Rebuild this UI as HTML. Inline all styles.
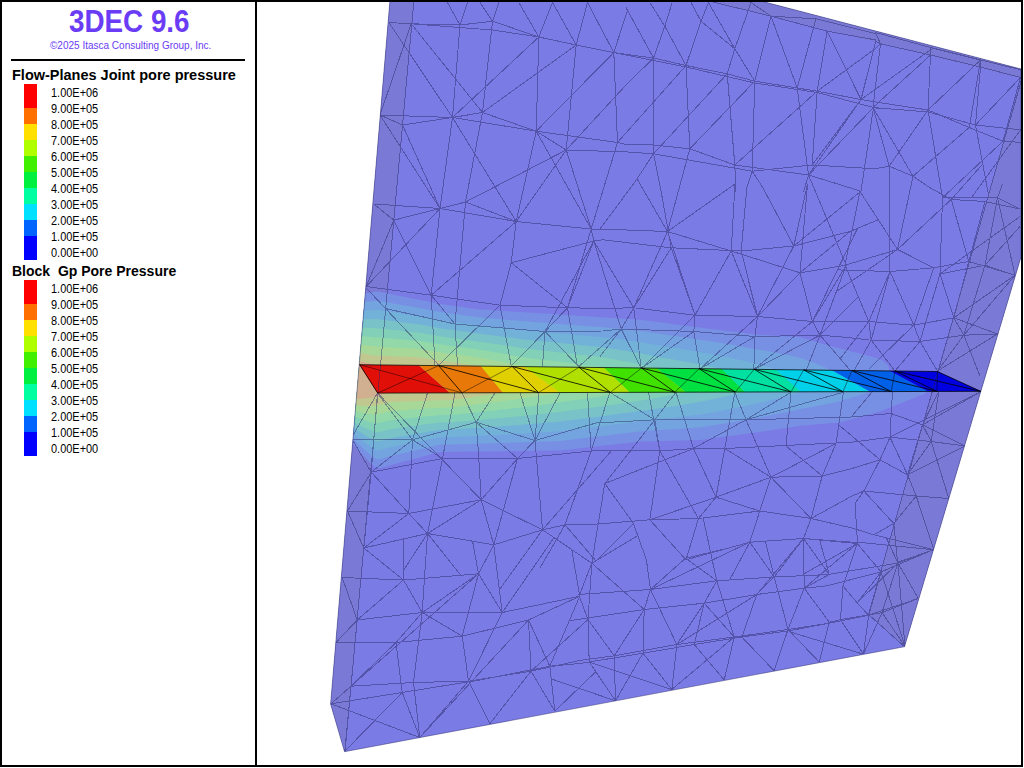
<!DOCTYPE html>
<html><head><meta charset="utf-8">
<style>
html,body{margin:0;padding:0;background:#fff;width:1024px;height:768px;overflow:hidden}
body{position:relative;font-family:"Liberation Sans",sans-serif}
.b{position:absolute;background:#000}
.t{position:absolute;white-space:nowrap;line-height:1}
.sw{position:absolute;left:24px;width:13px}
.lb{position:absolute;left:51px;font-size:12px;color:#000;white-space:nowrap;line-height:1;transform:scaleX(0.913);transform-origin:0 0}
svg{position:absolute;left:0;top:0}
</style></head><body>
<svg width="1024" height="768" viewBox="0 0 1024 768">
<defs><clipPath id="vp"><rect x="257" y="2" width="764" height="763"/></clipPath>
<clipPath id="blk"><polygon points="390,0 757,0 1021,69 1021,257 904.5,646.7 344.5,751.7 330.6,704"/></clipPath>
<clipPath id="jnt"><polygon points="359.4,364.7 937.4,371.5 980.6,391.3 377.5,393.1"/></clipPath>
</defs><g clip-path="url(#vp)">
<polygon points="390,0 757,0 1021,69 1021,257 904.5,646.7 344.5,751.7 330.6,704" fill="#7b7be6"/>
<polygon points="390,0 414,0 345,752 330.6,704" fill="#7a7ad6"/>
<polygon points="707,0 757,0 1021,69 1021,78" fill="#7a7ad6"/>
<polygon points="1024,70 1021,257 904.5,646.7 868.5,614.5" fill="#7a7ad6"/>
<g clip-path="url(#blk)">
<polygon points="320,292.9 324,293.3 328,293.7 332,294.2 336,294.6 340,295 344,295.5 348,295.9 352,296.3 356,295.3 360,294.3 364,293.5 368,292.9 372,292.2 376,291.6 380,292 384,292.8 388,293.6 392,294.4 396,295.2 400,296 404,296.8 408,297.6 412,298.4 416,299.2 420,300 424,300.8 428,301.6 432,302.4 436,303.2 440,304 444,304.6 448,305.1 452,305.7 456,306.2 460,306.8 464,307.3 468,307.9 472,308.4 476,309 480,309.5 484,309.8 488,310 492,310.3 496,310.5 500,310.8 504,311 508,311.3 512,311.6 516,311.8 520,312.1 524,312.3 528,312.6 532,312.8 536,313.1 540,313.3 544,313.6 548,313.8 552,314.1 556,314.4 560,314.6 564,314.9 568,315.1 572,315.4 576,315.6 580,315.9 584,316.1 588,316.4 592,316.6 596,316.9 600,317.2 604,317.4 608,317.7 612,317.9 616,318.2 620,318.4 624,318.7 628,318.9 632,319.2 636,319.4 640,319.7 644,320.2 648,320.7 652,321.3 656,321.8 660,322.3 664,322.8 668,323.3 672,323.9 676,324.4 680,324.9 684,325.4 688,325.9 692,326.5 696,327 700,327.5 704,328 708,328.5 712,329 716,329.5 720,330 724,330.5 728,331 732,331.5 736,332 740,332.4 744,332.9 748,333.4 752,333.9 756,334.4 760,334.9 764,335.1 768,335.3 772,335.5 776,335.7 780,335.9 784,336.2 788,336.4 792,336.6 796,336.8 800,337 804,338.2 808,339.4 812,340.6 816,341.8 820,343 824,344.1 828,345.3 832,346.5 836,347.5 840,348.5 844,349.6 848,350.6 852,351.7 856,352.7 860,353.7 864,354.8 868,355.8 872,356.8 876,357.9 880,358.9 884,362.1 888,365.3 890,372.9 928,389.5 924,394.5 920,395.5 916,397.1 912,398.7 908,400.3 904,401.9 900,403.5 896,405.1 892,406.7 888,408.3 884,409.9 880,411.5 876,412.6 872,413.7 868,414.8 864,415.9 860,417 856,418.1 852,419.1 848,420.2 844,421.3 840,422.4 836,422.8 832,423.1 828,423.4 824,423.8 820,424.1 816,424.5 812,424.8 808,425.2 804,425.5 800,425.8 796,426.5 792,427.1 788,427.7 784,428.3 780,428.9 776,429.5 772,430.1 768,430.7 764,431.3 760,432 756,432.5 752,433 748,433.6 744,434.1 740,434.7 736,435.2 732,435.7 728,436.3 724,436.8 720,437.3 716,437.9 712,438.4 708,439 704,439.5 700,440 696,440.1 692,440.2 688,440.3 684,440.4 680,440.5 676,440.6 672,440.7 668,440.8 664,440.9 660,441 656,441.1 652,441.2 648,441.3 644,441.4 640,441.5 636,442 632,442.4 628,442.9 624,443.3 620,443.8 616,444.2 612,444.7 608,445.1 604,445.6 600,446 596,446.5 592,446.9 588,447.4 584,447.8 580,448.3 576,448.7 572,449.2 568,449.7 564,450.1 560,450.6 556,450.6 552,450.6 548,450.7 544,450.7 540,450.8 536,450.8 532,450.9 528,450.9 524,451 520,451 516,451.1 512,451.1 508,451.1 504,451.2 500,451.2 496,451.3 492,451.3 488,451.4 484,451.4 480,451.5 476,451.5 472,451.6 468,451.6 464,451.6 460,451.7 456,451.7 452,451.8 448,451.8 444,451.9 440,451.9 436,453 432,454.1 428,455.1 424,456.2 420,457.3 416,458.4 412,459.4 408,460.5 404,461.6 400,462.6 396,463.7 392,464.8 388,465.9 384,466.9 380,468 376,467.9 372,464.3 368,460.5 364,456.5 360,452 356,447.4 352,442.8 348,443 344,443.3 340,443.5 336,443.7 332,444 328,444.2 324,444.4 320,444.7" fill="#7890e4"/>
<polygon points="320,300.3 324,300.8 328,301.3 332,301.8 336,302.3 340,302.8 344,303.2 348,303.7 352,304.2 356,303.4 360,302.6 364,302.1 368,301.6 372,301.2 376,300.7 380,301.1 384,301.8 388,302.5 392,303.3 396,304 400,304.7 404,305.4 408,306.1 412,306.8 416,307.5 420,308.2 424,309 428,309.8 432,310.5 436,311.3 440,312.1 444,312.6 448,313.2 452,313.7 456,314.3 460,314.8 464,315.4 468,315.9 472,316.5 476,317 480,317.6 484,317.9 488,318.2 492,318.6 496,318.9 500,319.3 504,319.6 508,319.9 512,320.3 516,320.6 520,321 524,321.3 528,321.6 532,321.9 536,322.2 540,322.5 544,322.8 548,323.1 552,323.4 556,323.7 560,324 564,324.4 568,324.7 572,325 576,325.3 580,325.6 584,325.9 588,326.2 592,326.5 596,326.8 600,327.1 604,327.4 608,327.8 612,328.2 616,328.6 620,328.9 624,329.3 628,329.7 632,330.1 636,330.5 640,330.9 644,331.5 648,332.1 652,332.7 656,333.3 660,333.9 664,334.5 668,335.1 672,335.7 676,336.3 680,336.9 684,337.4 688,338 692,338.6 696,339.2 700,339.8 704,340.4 708,341 712,341.6 716,342.2 720,342.8 724,343.5 728,344.1 732,344.8 736,345.5 740,346.2 744,346.9 748,347.7 752,348.4 756,349.2 760,349.9 764,350.6 768,351.2 772,351.9 776,352.7 780,353.4 784,354.2 788,355.1 792,355.9 796,356.9 800,357.9 804,359.3 808,360.8 812,362.3 816,363.8 820,365.3 824,366.9 828,368.6 832,372.3 870,389.6 868,392.3 864,393.6 860,394.9 856,396.1 852,397.4 848,398.6 844,399.8 840,401 836,402 832,402.9 828,403.7 824,404.6 820,405.4 816,406.1 812,406.9 808,407.6 804,408.3 800,409 796,409.9 792,410.8 788,411.6 784,412.5 780,413.3 776,414.1 772,415 768,415.7 764,416.5 760,417.3 756,418 752,418.8 748,419.5 744,420.2 740,420.8 736,421.5 732,422.2 728,422.8 724,423.5 720,424.1 716,424.8 712,425.4 708,426 704,426.7 700,427.3 696,427.6 692,427.9 688,428.2 684,428.5 680,428.8 676,429 672,429.3 668,429.6 664,429.8 660,430.1 656,430.4 652,430.6 648,430.8 644,431.1 640,431.3 636,431.8 632,432.3 628,432.8 624,433.3 620,433.8 616,434.3 612,434.7 608,435.2 604,435.7 600,436.2 596,436.6 592,437.1 588,437.6 584,438.1 580,438.5 576,439 572,439.5 568,439.9 564,440.4 560,440.9 556,441 552,441.2 548,441.3 544,441.5 540,441.6 536,441.8 532,441.9 528,442 524,442.2 520,442.3 516,442.4 512,442.6 508,442.7 504,442.8 500,442.9 496,443.1 492,443.2 488,443.3 484,443.4 480,443.6 476,443.7 472,443.8 468,443.9 464,444 460,444.2 456,444.3 452,444.4 448,444.5 444,444.5 440,444.5 436,445.5 432,446.4 428,447.4 424,448.3 420,449.2 416,450.2 412,451.1 408,452.1 404,453 400,453.9 396,454.9 392,455.8 388,456.8 384,457.9 380,459 376,459 372,455.9 368,452.7 364,449.3 360,445.3 356,441.4 352,437.3 348,437.6 344,437.9 340,438.2 336,438.4 332,438.7 328,439 324,439.3 320,439.5" fill="#74a4e0"/>
<polygon points="320,307.8 324,308.3 328,308.8 332,309.4 336,309.9 340,310.5 344,311 348,311.6 352,312.1 356,311.5 360,311 364,310.7 368,310.4 372,310.2 376,309.9 380,310.2 384,310.9 388,311.5 392,312.1 396,312.7 400,313.3 404,313.9 408,314.5 412,315.2 416,315.8 420,316.4 424,317.2 428,317.9 432,318.6 436,319.4 440,320.1 444,320.7 448,321.2 452,321.8 456,322.3 460,322.9 464,323.4 468,324 472,324.5 476,325.1 480,325.7 484,326 488,326.5 492,326.9 496,327.3 500,327.7 504,328.1 508,328.6 512,329 516,329.5 520,329.9 524,330.4 528,330.7 532,331.1 536,331.4 540,331.7 544,332.1 548,332.4 552,332.8 556,333.1 560,333.5 564,333.8 568,334.2 572,334.6 576,334.9 580,335.3 584,335.6 588,336 592,336.4 596,336.7 600,337.1 604,337.5 608,338 612,338.4 616,338.9 620,339.4 624,339.9 628,340.5 632,341 636,341.5 640,342.1 644,342.8 648,343.5 652,344.2 656,344.9 660,345.5 664,346.2 668,346.8 672,347.5 676,348.1 680,348.8 684,349.5 688,350.1 692,350.8 696,351.5 700,352.2 704,352.9 708,353.6 712,354.3 716,355 720,355.7 724,356.5 728,357.3 732,358.2 736,359.1 740,360 744,360.9 748,361.9 752,362.9 756,363.9 760,365 764,366 768,367.1 772,368.3 776,371.6 801,389.8 800,392.1 796,393.3 792,394.5 788,395.6 784,396.7 780,397.7 776,398.8 772,399.8 768,400.8 764,401.7 760,402.7 756,403.6 752,404.5 748,405.4 744,406.2 740,407 736,407.8 732,408.6 728,409.4 724,410.1 720,410.9 716,411.7 712,412.4 708,413.1 704,413.9 700,414.6 696,415.1 692,415.6 688,416 684,416.5 680,417 676,417.5 672,417.9 668,418.3 664,418.8 660,419.2 656,419.6 652,420 648,420.4 644,420.7 640,421.1 636,421.7 632,422.2 628,422.8 624,423.3 620,423.8 616,424.3 612,424.8 608,425.3 604,425.8 600,426.3 596,426.8 592,427.3 588,427.8 584,428.3 580,428.8 576,429.3 572,429.8 568,430.2 564,430.7 560,431.2 556,431.5 552,431.7 548,432 544,432.2 540,432.5 536,432.7 532,432.9 528,433.2 524,433.4 520,433.6 516,433.8 512,434 508,434.2 504,434.4 500,434.7 496,434.9 492,435.1 488,435.3 484,435.5 480,435.7 476,435.9 472,436.1 468,436.3 464,436.4 460,436.6 456,436.8 452,437 448,437.1 444,437.1 440,437.2 436,438 432,438.8 428,439.6 424,440.4 420,441.2 416,442 412,442.8 408,443.6 404,444.4 400,445.2 396,446.1 392,446.9 388,447.8 384,448.9 380,449.9 376,450.1 372,447.6 368,444.9 364,442 360,438.7 356,435.3 352,431.9 348,432.2 344,432.5 340,432.8 336,433.1 332,433.5 328,433.8 324,434.1 320,434.4" fill="#72b2d8"/>
<polygon points="320,315.2 324,315.8 328,316.4 332,317 336,317.6 340,318.2 344,318.8 348,319.4 352,320 356,319.7 360,319.3 364,319.2 368,319.2 372,319.2 376,319.1 380,319.4 384,319.9 388,320.4 392,320.9 396,321.4 400,322 404,322.5 408,323 412,323.5 416,324 420,324.6 424,325.3 428,326 432,326.7 436,327.5 440,328.2 444,328.7 448,329.3 452,329.8 456,330.4 460,330.9 464,331.5 468,332.1 472,332.6 476,333.2 480,333.7 484,334.2 488,334.7 492,335.2 496,335.7 500,336.2 504,336.7 508,337.2 512,337.7 516,338.3 520,338.8 524,339.4 528,339.8 532,340.2 536,340.6 540,341 544,341.3 548,341.7 552,342.1 556,342.5 560,342.9 564,343.3 568,343.7 572,344.1 576,344.6 580,345 584,345.4 588,345.8 592,346.2 596,346.6 600,347.1 604,347.5 608,348.1 612,348.7 616,349.3 620,349.9 624,350.6 628,351.2 632,351.9 636,352.5 640,353.2 644,354 648,354.8 652,355.6 656,356.4 660,357.2 664,357.9 668,358.6 672,359.3 676,360 680,360.8 684,361.5 688,362.2 692,363 696,363.8 700,364.5 704,365.3 708,366.1 712,366.9 716,367.7 720,368.5 722,371 745,390 744,392.2 740,393.2 736,394.1 732,395 728,395.9 724,396.8 720,397.7 716,398.5 712,399.4 708,400.2 704,401 700,401.8 696,402.6 692,403.2 688,403.9 684,404.6 680,405.2 676,405.9 672,406.5 668,407.1 664,407.7 660,408.3 656,408.8 652,409.4 648,409.9 644,410.4 640,410.9 636,411.5 632,412.2 628,412.7 624,413.3 620,413.8 616,414.3 612,414.8 608,415.4 604,415.9 600,416.4 596,416.9 592,417.5 588,418 584,418.5 580,419 576,419.5 572,420 568,420.5 564,421 560,421.6 556,421.9 552,422.3 548,422.6 544,423 540,423.3 536,423.6 532,424 528,424.3 524,424.6 520,424.9 516,425.2 512,425.5 508,425.8 504,426.1 500,426.4 496,426.7 492,426.9 488,427.2 484,427.5 480,427.8 476,428.1 472,428.3 468,428.6 464,428.8 460,429.1 456,429.3 452,429.6 448,429.7 444,429.8 440,429.8 436,430.5 432,431.1 428,431.8 424,432.5 420,433.2 416,433.8 412,434.5 408,435.2 404,435.9 400,436.5 396,437.2 392,437.9 388,438.8 384,439.8 380,440.9 376,441.2 372,439.2 368,437.1 364,434.8 360,432.1 356,429.3 352,426.4 348,426.8 344,427.1 340,427.5 336,427.9 332,428.2 328,428.6 324,428.9 320,429.2" fill="#78c2c8"/>
<polygon points="320,322.7 324,323.3 328,324 332,324.6 336,325.2 340,325.9 344,326.6 348,327.2 352,327.9 356,327.8 360,327.7 364,327.8 368,328 372,328.1 376,328.2 380,328.5 384,328.9 388,329.3 392,329.8 396,330.2 400,330.6 404,331 408,331.5 412,331.9 416,332.3 420,332.8 424,333.5 428,334.2 432,334.8 436,335.5 440,336.2 444,336.8 448,337.3 452,337.9 456,338.4 460,339 464,339.6 468,340.1 472,340.7 476,341.2 480,341.8 484,342.3 488,342.9 492,343.5 496,344 500,344.6 504,345.2 508,345.8 512,346.5 516,347.1 520,347.7 524,348.4 528,348.9 532,349.3 536,349.7 540,350.2 544,350.6 548,351 552,351.5 556,351.9 560,352.4 564,352.8 568,353.3 572,353.7 576,354.2 580,354.7 584,355.1 588,355.6 592,356.1 596,356.6 600,357.1 604,357.5 608,358.2 612,359 616,359.7 620,360.4 624,361.2 628,362 632,362.8 636,363.6 640,364.4 644,365.3 648,366.2 652,367.1 656,368 657,370.2 686,390.2 684,392.6 680,393.5 676,394.3 672,395.1 668,395.8 664,396.6 660,397.3 656,398 652,398.7 648,399.4 644,400.1 640,400.7 636,401.4 632,402.1 628,402.7 624,403.2 620,403.8 616,404.4 612,404.9 608,405.5 604,406 600,406.5 596,407.1 592,407.6 588,408.2 584,408.7 580,409.2 576,409.8 572,410.3 568,410.8 564,411.4 560,411.9 556,412.4 552,412.8 548,413.3 544,413.7 540,414.1 536,414.6 532,415 528,415.4 524,415.8 520,416.2 516,416.6 512,417 508,417.3 504,417.7 500,418.1 496,418.5 492,418.8 488,419.2 484,419.5 480,419.9 476,420.2 472,420.6 468,420.9 464,421.2 460,421.6 456,421.9 452,422.2 448,422.4 444,422.4 440,422.4 436,423 432,423.5 428,424 424,424.6 420,425.1 416,425.7 412,426.2 408,426.8 404,427.3 400,427.8 396,428.4 392,428.9 388,429.7 384,430.8 380,431.8 376,432.3 372,430.9 368,429.3 364,427.5 360,425.4 356,423.2 352,421 348,421.4 344,421.8 340,422.2 336,422.6 332,423 328,423.3 324,423.7 320,424.1" fill="#82d0b8"/>
<polygon points="320,330.2 324,330.8 328,331.5 332,332.2 336,332.9 340,333.6 344,334.3 348,335 352,335.8 356,335.9 360,336.1 364,336.4 368,336.7 372,337.1 376,337.4 380,337.6 384,337.9 388,338.3 392,338.6 396,338.9 400,339.2 404,339.6 408,339.9 412,340.2 416,340.6 420,341 424,341.6 428,342.3 432,342.9 436,343.6 440,344.3 444,344.8 448,345.4 452,345.9 456,346.5 460,347 464,347.6 468,348.2 472,348.7 476,349.3 480,349.9 484,350.4 488,351.1 492,351.7 496,352.4 500,353.1 504,353.8 508,354.5 512,355.2 516,355.9 520,356.7 524,357.4 528,358 532,358.4 536,358.9 540,359.4 544,359.8 548,360.3 552,360.8 556,361.3 560,361.8 564,362.3 568,362.8 572,363.3 576,363.8 580,364.4 584,364.9 588,365.4 592,365.9 596,366.5 600,367 604,369.6 630,390.3 628,392.6 624,393.2 620,393.8 616,394.4 612,395 608,395.5 604,396.1 600,396.7 596,397.2 592,397.8 588,398.4 584,398.9 580,399.5 576,400 572,400.6 568,401.1 564,401.7 560,402.2 556,402.8 552,403.4 548,403.9 544,404.5 540,405 536,405.5 532,406 528,406.5 524,407 520,407.5 516,408 512,408.4 508,408.9 504,409.3 500,409.8 496,410.2 492,410.7 488,411.1 484,411.6 480,412 476,412.4 472,412.8 468,413.2 464,413.6 460,414 456,414.4 452,414.8 448,415 444,415 440,415 436,415.4 432,415.9 428,416.3 424,416.7 420,417.1 416,417.5 412,417.9 408,418.3 404,418.7 400,419.1 396,419.5 392,420 388,420.7 384,421.7 380,422.8 376,423.4 372,422.5 368,421.5 364,420.3 360,418.8 356,417.2 352,415.5 348,415.9 344,416.4 340,416.8 336,417.3 332,417.7 328,418.1 324,418.5 320,419" fill="#92d8a8"/>
<polygon points="320,337.6 324,338.3 328,339.1 332,339.8 336,340.6 340,341.3 344,342.1 348,342.9 352,343.7 356,344 360,344.4 364,344.9 368,345.5 372,346.1 376,346.6 380,346.7 384,346.9 388,347.2 392,347.4 396,347.7 400,347.9 404,348.1 408,348.4 412,348.6 416,348.8 420,349.2 424,349.8 428,350.4 432,351.1 436,351.7 440,352.3 444,352.9 448,353.4 452,354 456,354.5 460,355.1 464,355.7 468,356.2 472,356.8 476,357.4 480,357.9 484,358.6 488,359.3 492,360 496,360.8 500,361.5 504,362.3 508,363.1 512,363.9 516,364.7 520,365.6 524,366.4 525,368.6 560,390.6 556,393.2 552,393.9 548,394.6 544,395.2 540,395.8 536,396.4 532,397 528,397.6 524,398.2 520,398.8 516,399.3 512,399.9 508,400.4 504,400.9 500,401.5 496,402 492,402.6 488,403.1 484,403.6 480,404.1 476,404.6 472,405.1 468,405.6 464,406 460,406.5 456,406.9 452,407.4 448,407.6 444,407.6 440,407.7 436,407.9 432,408.2 428,408.5 424,408.8 420,409 416,409.3 412,409.6 408,409.9 404,410.2 400,410.4 396,410.7 392,411 388,411.7 384,412.7 380,413.8 376,414.5 372,414.1 368,413.7 364,413 360,412.1 356,411.1 352,410 348,410.5 344,411 340,411.5 336,412 332,412.4 328,412.9 324,413.4 320,413.8" fill="#a8d898"/>
<polygon points="320,345.1 324,345.8 328,346.6 332,347.4 336,348.2 340,349 344,349.9 348,350.7 352,351.5 356,352.1 360,352.8 364,353.5 368,354.3 372,355.1 376,355.7 380,355.8 384,356 388,356.1 392,356.3 396,356.4 400,356.5 404,356.7 408,356.8 412,357 416,357.1 420,357.4 424,358 428,358.6 432,359.2 436,359.7 440,360.3 444,360.9 448,361.5 452,362 456,362.6 460,363.2 464,363.7 468,364.3 472,364.9 476,365.4 480,366 481,368.1 503,390.7 500,393.2 496,393.8 492,394.4 488,395 484,395.6 480,396.2 476,396.8 472,397.3 468,397.9 464,398.4 460,399 456,399.5 452,400 448,400.3 444,400.3 440,400.3 436,400.4 432,400.6 428,400.7 424,400.9 420,401 416,401.2 412,401.3 408,401.4 404,401.6 400,401.7 396,401.9 392,402 388,402.6 384,403.7 380,404.7 376,405.6 372,405.8 368,405.9 364,405.8 360,405.5 356,405.1 352,404.6 348,405.1 344,405.6 340,406.2 336,406.7 332,407.2 328,407.7 324,408.2 320,408.7" fill="#c0c890"/>
<polygon points="320,352.5 324,353.3 328,354.2 332,355 336,355.9 340,356.8 344,357.6 348,358.5 352,359.4 356,360.3 360,361.1 364,362.1 368,363 372,364.1 375,366.9 390,391.1 388,393.6 384,394.6 380,395.7 376,396.7 372,397.4 368,398 364,398.5 360,398.8 356,399 352,399.1 348,399.7 344,400.3 340,400.8 336,401.4 332,401.9 328,402.5 324,403 320,403.5" fill="#d0b090"/>
</g>
<g clip-path="url(#jnt)">
<polygon points="200,355 407.3,355 458,400 200,400" fill="#e01008"/>
<polygon points="407.3,355 471.8,355 509,400 458,400" fill="#e87808"/>
<polygon points="471.8,355 509.3,355 570.1,400 509,400" fill="#e0d000"/>
<polygon points="509.3,355 590.8,355 638,400 570.1,400" fill="#b0e000"/>
<polygon points="590.8,355 641,355 695.5,400 638,400" fill="#40e000"/>
<polygon points="641,355 708.1,355 753,400 695.5,400" fill="#00e040"/>
<polygon points="708.1,355 759.6,355 810.2,400 753,400" fill="#00e0a0"/>
<polygon points="759.6,355 804.9,355 884.9,400 810.2,400" fill="#00d0e8"/>
<polygon points="804.9,355 860.5,355 943.8,400 884.9,400" fill="#0060e8"/>
<polygon points="860.5,355 1100,355 1100,400 943.8,400" fill="#0000e0"/>
</g>
<path d="M390,0 L757,0 L1021,69 L1021,257 L904.5,646.7 L344.5,751.7 L330.6,704 Z" fill="none" stroke="#282864" stroke-opacity="0.45" stroke-width="1"/>
<g clip-path="url(#blk)"><path d="M447.5,2.5 L460,25M467.5,2.5 L460,25M480,2.5 L492.5,21.2M498.8,2.5 L492.5,21.2M518.8,2.5 L538.8,37M552.5,2.5 L538.8,37M552.5,2.5 L576.2,45M587.5,2.5 L576.2,45M587.5,2.5 L613.8,52.5M627.5,10.3 L613.8,52.5M388.8,22.5 L411.2,23.8 L460,25 L492.5,21.2M411.2,23.8 L492.5,30 L538.8,37M492.5,21.2 L538.8,37M538.8,37 L576.2,45 L613.8,52.5 L626,54.4M460,25 L452.5,117.5M492.5,21.2 L482.5,112.5M538.8,37 L536.2,131.2M576.2,45 L566.2,150M613.8,52.5 L617.5,142.5M388.8,22.5 L452.5,117.5M411.2,23.8 L482.5,112.5M538.8,37 L452.5,117.5M576.2,45 L482.5,112.5M613.8,52.5 L536.2,131.2M626,85 L566.2,150M380,115 L452.5,117.5 L482.5,112.5M402.5,125 L452.5,117.5M452.5,117.5 L536.2,131.2 L566.2,150M482.5,112.5 L536.2,131.2 L617.5,142.5 L626,144.4M380,115 L402.5,125M566.2,150 L626,151.9M402.5,125 L440,208.5M452.5,117.5 L440,208.5M452.5,117.5 L516.2,221.5M482.5,112.5 L465.5,202M536.2,131.2 L516.2,221.5M536.2,131.2 L591.2,229M566.2,150 L465.5,202M566.2,150 L516.2,221.5M566.2,150 L591.2,229M617.5,142.5 L591.2,229M380,115 L440,208.5M411.2,23.8 L380,115M626,54.4 L653.5,58 L686,65.5 L727.2,73.8 L754.8,81.2 L797.2,88 L817.2,91.2 L861,99.5 L875,101.9M613.8,52.5 L686,67 L754.8,83 L817.2,92.5 L873.5,107.5 L882,109M713,2 L771,16.2 L827.2,31.2 L876,40 L875,41M751,2.5 L771,16.2 L816,18.8 L876,33.8M626,7.5 L653.5,58M649.8,2.5 L664.8,26.2M672.2,2.5 L664.8,26.2M664.8,26.2 L653.5,58M664.8,26.2 L686,65.5M691,2.5 L701,21.2M708.5,2.5 L701,21.2M701,21.2 L686,65.5M701,21.2 L734.8,48.8M708.5,2.5 L734.8,48.8 L754.8,81.2M751,2.5 L734.8,48.8 L727.2,73.8M771,16.2 L754.8,81.2M771,16.2 L797.2,88M816,18.8 L797.2,88M827.2,31.2 L817.2,91.2M827.2,31.2 L861,99.5M876,40 L861,99.5M653.5,58 L653.5,153.8M686,65.5 L689.8,148.8M727.2,73.8 L734.8,165M754.8,81.2 L752.2,171.2M797.2,88 L808.5,175M817.2,91.2 L812.2,165M861,99.5 L808.5,175M873.5,107.5 L861,191.2M626,85 L653.5,58M617.5,142.5 L686,65.5M653.5,153.8 L727.2,73.8M689.8,148.8 L754.8,81.2M734.8,165 L817.2,91.2M812.2,165 L861,99.5M808.5,175 L873.5,107.5M817.2,91.2 L875,48.8M626,144.4 L653.5,145 L689.8,148.8 L734.8,165M626,151.9 L653.5,153.8 L752.2,171.2M752.2,171.2 L812.2,165 L875,168.8M734.8,165 L808.5,175 L861,191.2M653.5,153.8 L634.9,182M653.5,153.8 L660.5,188M689.8,148.8 L679.2,188M734.8,165 L736,192M752.2,171.2 L746.8,188M752.2,171.2 L763,188M808.5,175 L803.5,192M875,41 L880.5,43.8 L930.5,55 L980.5,67 L1020.5,77.5M875.5,32.5 L930.5,47.5 L980.5,60 L1022,70M875.5,32.5 L880.5,43.8M930.5,47.5 L930.5,55M980.5,60 L980.5,67M880.5,43.8 L873,107.5M930.5,55 L928,110M980.5,60 L969.2,127.5M980.5,67 L975.5,125M1020.5,77.5 L1003,141.2M880.5,43.8 L875,48.8M933,48.1 L861,99.5M930.5,55 L873,107.5M980.5,60 L928,110M1020.5,77.5 L975.5,125M928,110 L889.2,166.2M969.2,127.5 L913,176.2M1003,141.2 L942.5,197.8M1020.5,130 L971.3,197.8M875,101.9 L928,110 L969.2,127.5 L1003,141.2 L1022,142.5M873,107.5 L928,112 L975.5,125 L1022,130M873,107.5 L889.2,166.2M873,107.5 L913,176.2M928,110 L942.5,197.8M975.5,125 L988.5,194.9M875,168.8 L889.2,166.2 L913,176.2 L928.8,187M889.2,166.2 L889.6,188M1022,78 L868.5,614.5 L904.5,646.7M373.8,204 L440,208.5 L516.2,221.5 L591.2,229 L606,229M393.8,220.2 L440,208.5 L465.5,202M373.8,204 L393.8,220.2M465.5,202 L516.2,221.5M440,208.5 L431.2,295.2M465.5,202 L455,324M516.2,221.5 L511.2,262.8M593.8,241 L511.2,262.8M393.8,220.2 L431.2,295.2M393.8,220.2 L366.2,286.5M440,208.5 L366.2,286.5M516.2,221.5 L431.2,295.2M511.2,262.8 L500,305.2M511.2,262.8 L567.5,307.8M366.2,286.5 L431.2,295.2 L500,305.2 L567.5,307.8 L603,308.4M385.7,308.6 L455,324 L545,331.5 L603,331M431.2,295.2 L455,324M455,324 L457.5,365M431.2,295.2 L435,365M500,305.2 L511.2,366M500,305.2 L438.8,365.2M567.5,307.8 L545,331.5M567.5,307.8 L593.8,241M545,331.5 L578.8,366.5M545,331.5 L511.2,366M545,331.5 L542.5,366M545,331.5 L593.8,241M567.5,307.8 L577.5,366.5M621.2,329 L578.8,366.5M366.2,288 L438.8,365.2M591.2,229 L567.5,307.8M591.2,229 L593.8,241 L603,239.8M600,229 L667.5,231.5 L731.2,251 L800,272.8 L846.2,265.2 L848,264.5M603,239.8 L671.2,247.8 L741.2,251 L793.8,246 L850,231.5 L878.3,219.7M603,308.4 L633.8,307.8 L695,315.2 L757.5,316.5 L812.5,321.5 L848,321.5M603,331 L621.2,329 L693.8,331.5 L755,336.5 L820,335.2 L848,337.5M634.9,182 L600,229M637,178.8 L667.5,231.5M679.2,188 L667.5,231.5M660.5,188 L671.2,247.8M735,184 L667.5,231.5M735,184 L731.2,251M746.8,188 L741.2,251M763,188 L793.8,246M807.5,184 L793.8,246M807.5,184 L800,272.8M808.5,175 L846.2,265.2M861,191.2 L793.8,246M850,231.5 L800,272.8M667.5,231.5 L633.8,307.8M671.2,247.8 L695,315.2M667.5,231.5 L695,315.2M671.2,247.8 L633.8,307.8M593.8,241 L633.8,307.8M731.2,251 L695,315.2M741.2,251 L757.5,316.5M731.2,251 L757.5,316.5M793.8,246 L757.5,316.5M800,272.8 L812.5,321.5M846.2,265.2 L812.5,321.5M633.8,307.8 L621.2,329M633.8,307.8 L641.2,368.5M695,315.2 L693.8,331.5M695,315.2 L641.2,368.5M757.5,316.5 L755,336.5M757.5,316.5 L700,369M812.5,321.5 L753.8,369.5M812.5,321.5 L820,335.2M621.2,329 L641.2,368.5M621.2,329 L600,356.5M693.8,331.5 L700,369M693.8,331.5 L641.2,368.5M755,336.5 L753.8,369.5M755,336.5 L700,369M820,335.2 L806.2,370.2M820,335.2 L850,370M820,335.2 L753.8,369.5M846.2,265.2 L820,335.2M857.5,228.4 L812.5,321.5M858.3,296.7 L820,335.2M800,272.8 L757.5,316.5M593.8,241 L621.2,329M848,264.5 L845,265.2 L897.5,249.5 L933.8,267.8M837.4,269.9 L890,271.5 L933.8,267.8 L968.8,261.5 L1015,275.2M940,274 L985,265.2 L1015,275.2M942.5,197.8 L997.5,197.8 L1020,209M951.2,199.5 L985,201.5 L1020,209M860,191.5 L845,265.2M860,191.5 L897.5,249.5M889.6,188 L890,271.5M913,176.2 L897.5,249.5M928.8,187 L951.2,199.5M951.2,199.5 L897.5,249.5 L836.4,291.5M951.2,199.5 L968.8,261.5M942.5,197.8 L940,274M982.8,164 L951.2,199.5M985,201.5 L968.8,261.5M997.5,197.8 L985,265.2M997.5,197.8 L1015,275.2M1020,216.5 L940,274M1020,226.5 L985,265.2M1002.5,184 L997.5,197.8M845,265.2 L868.8,321.5M890,271.5 L868.8,321.5M890,271.5 L913.8,325.2M890,271.5 L871.2,340.2M933.8,267.8 L913.8,325.2M940,274 L953.8,317.8M940,274 L920,341.5M968.8,261.5 L953.8,317.8M985,265.2 L963.8,335.2M1015,275.2 L953.8,317.8M1015,275.2 L963.8,335.2M848,321.5 L868.8,321.5 L913.8,325.2 L953.8,317.8 L997.5,334M848,337.5 L871.2,340.2 L920,341.5 L963.8,335.2 L997.5,334M868.8,321.5 L840,359M868.8,321.5 L871.2,340.2M913.8,325.2 L920,341.5M953.8,317.8 L963.8,335.2M871.2,340.2 L853.8,371M871.2,340.2 L895,371M920,341.5 L895,371M920,341.5 L937.5,371M963.8,335.2 L937.5,371M963.8,335.2 L980,376M997.5,334 L937.5,371M913.8,325.2 L868.8,369M352.5,439.8 L412.5,439.8 L476.2,422.2 L535,440.5 L596,423M371.2,472.2 L442.5,458.5 L478.8,458.5 L517.5,458.5 L591.2,451 L596,450.5M347.5,511 L408.8,513.5 L481.2,499.8 L542.5,529.8M363.8,548 L427.5,533.5 L493.8,544.8 L542.5,529.8 L565,524.8 L596,524.1M377.5,393 L412.5,439.8M377.5,393 L352.5,436M377.5,393 L371.2,472.2M427.5,393 L412.5,439.8M462,393 L476.2,422.2M455,393 L442.5,458.5M495,393 L476.2,422.2M538.8,393 L535,440.5M520,393 L535,440.5M560,393 L535,440.5M587.5,393 L591.2,451M476.2,422.2 L517.5,458.5M476.2,422.2 L478.8,458.5M412.5,439.8 L442.5,458.5M412.5,439.8 L371.2,472.2M412.5,439.8 L408.8,513.5M377.5,393 L481.2,499.8M535,440.5 L517.5,458.5M535,440.5 L542.5,529.8M517.5,458.5 L481.2,499.8M517.5,458.5 L493.8,544.8M478.8,458.5 L481.2,499.8M442.5,458.5 L427.5,533.5M371.2,472.2 L408.8,513.5M371.2,472.2 L363.8,548M371.2,472.2 L347.5,511M408.8,513.5 L427.5,533.5M408.8,513.5 L363.8,548M481.2,499.8 L493.8,544.8M481.2,499.8 L427.5,533.5M565,524.8 L591.2,451M611.6,450.6 L542.5,529.8M542.5,529.8 L499.4,589.7M542.5,529.8 L591.8,563.2M565,524.8 L540,568M565,524.8 L596,561M493.8,544.8 L478.5,573.8M427.5,533.5 L403.5,570.3M427.5,533.5 L460.8,575.2M347.5,511 L363.8,548M352.5,439.8 L371.2,472.2M596,423 L654.8,419.8 L746,419.8 L852,417M596,450.5 L659.8,451 L693.5,448.5 L724.8,448.5 L852,442.2M604.8,483.5 L693.5,448.5 L746,419.8M596,524.1 L649.8,519.8 L698.5,518.5 L759.8,511 L811,518.5 L852,528M716,497.2 L771,477.2 L822.2,476 L852,468.5M686,559.8 L749.8,542.2 L803.5,538.5 L852,542.2M649.8,519.8 L716,497.2M609.8,392.2 L654.8,419.8M609.8,392.2 L591.2,451M676,392.2 L654.8,419.8M676,392.2 L693.5,448.5M734.8,392.2 L746,419.8M734.8,392.2 L724.8,448.5M791,392.2 L746,419.8M843.5,392.2 L746,419.8M791,392.2 L786,446M843.5,392.2 L836,443.5M648.5,392.2 L659.8,451M654.8,419.8 L659.8,451M654.8,419.8 L604.8,483.5M659.8,451 L649.8,519.8M659.8,451 L698.5,518.5M693.5,448.5 L716,497.2M724.8,448.5 L716,497.2M724.8,448.5 L771,477.2M746,419.8 L771,477.2M836,443.5 L822.2,476M836,443.5 L771,477.2M786,446 L822.2,476M771,477.2 L759.8,511M771,477.2 L811,518.5M822.2,476 L811,518.5M716,497.2 L698.5,518.5M716,497.2 L759.8,511M604.8,483.5 L633.5,523.5M604.8,483.5 L591.8,563.2M649.8,519.8 L686,559.8M698.5,518.5 L686,559.8M759.8,511 L749.8,542.2M811,518.5 L803.5,538.5M633.5,523.5 L596,561M633.5,523.5 L646.4,560M749.8,542.2 L729.6,579.9M749.8,542.2 L774.2,577M803.5,538.5 L774.2,577M803.5,538.5 L829.2,574.5M811,518.5 L852,496M852,417 L891.2,413.5 L922.5,424.8 L965,446M852,442.2 L890,437.2 L931.2,441.5 L965,446M852,468.5 L880,459.8 L907.5,474.8M852,496 L863.8,491 L916.2,496 L948.8,498.5M852,528 L873.8,534.8 L933.8,549.8M852,542.2 L857.5,542.2 L933.8,549.8M892.5,391.5 L891.2,413.5M938.8,391.5 L922.5,424.8M938.8,391.5 L931.2,441.5M981.2,391.5 L922.5,424.8M981.2,391.5 L890,437.2M872.5,391.5 L851.1,417M891.2,413.5 L890,437.2M922.5,424.8 L931.2,441.5M890,437.2 L880,459.8M890,437.2 L907.5,474.8M931.2,441.5 L907.5,474.8M931.2,441.5 L948.8,498.5M965,446 L907.5,474.8M880,459.8 L863.8,491M880,459.8 L838.7,424.8M907.5,474.8 L916.2,496M907.5,474.8 L922.5,424.8M916.2,496 L893.8,523.5M916.2,496 L933.8,549.8M863.8,491 L855,503.5M863.8,491 L893.8,523.5M855,503.5 L857.5,542.2M893.8,523.5 L873.8,534.8M893.8,523.5 L897.5,562.2M933.8,549.8 L897.5,562.2M342.2,577.5 L403.5,580 L478.5,573.8M357.2,620 L422.2,612.5 L502.2,612.5 L579.8,596.2M396,642.5 L462.2,636.2 L528.5,620 L579.8,596.2M336,642.5 L396,642.5M351,686.2 L413.5,682.5 L468.5,681.2 L531,671.2 L580,660.4M331,703.8 L402.2,692.5 L479.8,680 L549.8,666.2 L580,663.5M363.8,548 L403.5,580M403.5,539 L403.5,580M427.5,533.5 L422.2,612.5M472.6,541.2 L478.5,573.8M493.8,544.8 L502.2,612.5M554,537.6 L502.2,612.5M571.7,549.6 L579.8,596.2M403.5,580 L422.2,612.5M403.5,580 L357.2,620M478.5,573.8 L422.2,612.5M478.5,573.8 L502.2,612.5M478.5,573.8 L462.2,636.2M342.2,577.5 L357.2,620M422.2,612.5 L462.2,636.2M422.2,612.5 L396,642.5M422.2,612.5 L413.5,682.5M396,642.5 L402.2,692.5M396,642.5 L351,686.2M462.2,636.2 L468.5,681.2M502.2,612.5 L468.5,681.2M528.5,620 L531,671.2M528.5,620 L549.8,666.2M579.8,596.2 L549.8,666.2M588,619.5 L531,671.2M351,686.2 L331,703.8M351,686.2 L344.8,751.2M357.2,620 L351,686.2M357.2,620 L336,642.5M402.2,692.5 L419.8,737.5M402.2,692.5 L344.8,751.2M413.5,682.5 L419.8,737.5M468.5,681.2 L419.8,737.5M468.5,681.2 L489.8,723.8M531,671.2 L489.8,723.8M531,671.2 L554.8,711.2M549.8,666.2 L554.8,711.2M595.8,671.7 L554.8,711.2M331,703.8 L419.8,737.5M331,703.8 L478.5,573.8M419.8,737.5 L528.5,620M578,594.5 L650.5,589.5 L716.8,580.8 L774.2,577 L829.2,574.5 L827,574.7M569.2,620.8 L644.2,609.5 L704.2,603.2 L756.8,594.5 L804.2,588.2 L827,585.8M580,660.4 L614.2,655.8 L676.8,644.5 L734.2,637 L788,629.5 L827,623.5M580,663.5 L589.2,662 L643,653.2 L694.2,644.5 L741.8,637 L788,631 L827,623.6M591.8,563.2 L579.2,595.8M591.8,563.2 L588,619.5M591.8,563.2 L644.2,609.5M637.8,535.6 L591.8,563.2M646.4,560 L650.5,589.5M685.5,558.2 L650.5,589.5M685.5,558.2 L716.8,580.8M685.5,558.2 L727.8,548.3M703.1,517.9 L716.8,580.8M749.8,542.2 L650.5,589.5M765.3,541.2 L774.2,577M803.5,538.5 L756.8,594.5M803.5,538.5 L804.2,588.2M819.7,540 L829.2,574.5M829.2,574.5 L804.2,588.2M650.5,589.5 L644.2,609.5M650.5,589.5 L676.8,644.5M716.8,580.8 L704.2,603.2M716.8,580.8 L734.2,637M774.2,577 L756.8,594.5M774.2,577 L788,629.5M804.2,588.2 L788,629.5M804.2,588.2 L829.2,622M644.2,609.5 L643,653.2M644.2,609.5 L614.2,655.8M704.2,603.2 L676.8,644.5M704.2,603.2 L694.2,644.5M704.2,603.2 L734.2,637M756.8,594.5 L741.8,637M756.8,594.5 L676.8,644.5M588,619.5 L614.2,655.8M588,619.5 L589.2,662M579.2,595.8 L588,619.5M589.2,662 L615.5,700.8M614.2,655.8 L615.5,700.8M643,653.2 L615.5,700.8M643,653.2 L671.8,689.5M676.8,644.5 L671.8,689.5M694.2,644.5 L724.2,680M734.2,637 L724.2,680M734.2,637 L671.8,689.5M741.8,637 L774.2,670.8M788,629.5 L774.2,670.8M788,629.5 L819.2,662M829.2,622 L819.2,662M551.2,678.9 L615.5,700.8M589.2,662 L671.8,689.5M803.5,538.5 L857.2,543.5M827,585.8 L881.1,571.9 L933.3,549.7M827,574.7 L897.9,563 L933.3,549.7M827,623.6 L828.9,622.3 L840.4,619.7 L882,612.6 L918.3,598.4M827,623.5 L868.7,615.3 L918.3,598.4M857.2,543.5 L804.2,588.2M857.2,543.5 L881.1,571.9M857.2,543.5 L843,586M804,573.9 L857.2,543.5M897.9,563 L918.3,598.4M897.9,563 L857.2,602.9M897.9,563 L882,612.6M897.9,563 L905,646.3M886.3,537.9 L897.9,563M881.1,571.9 L868.7,615.3M881.1,571.9 L905,646.3M881.1,571.9 L857.2,602.9M843,586 L857.2,602.9M843,586 L840.4,619.7M857.2,602.9 L868.7,615.3M840.4,619.7 L863.4,654.2M868.7,615.3 L863.4,654.2M882,612.6 L863.4,654.2M882,612.6 L905,646.3M790.4,632 L863.4,654.2M414,0 L345,752" fill="none" stroke="#282864" stroke-opacity="0.46" stroke-width="1" shape-rendering="crispEdges"/></g>
<path d="M359.7,364.7 L462,392.8M377.7,393.1 L438.6,365.6M462,392.8 L512.2,366.5M538.6,392.6 L579,367.3M610.3,392.4 L641.6,368M674.8,392.2 L699.2,368.7M735.3,392 L754.2,369.3M791,391.9 L803.7,369.9M843,391.7 L851.9,370.5M891.2,391.6 L895,371M937,391.4 L937.4,371.5" fill="none" stroke="#000" stroke-opacity="0.45" stroke-width="1"/>
<path d="M359.7,364.7 L377.7,393.1M438.6,365.6 L462,392.8M438.6,365.6 L538.6,392.6M512.2,366.5 L538.6,392.6M512.2,366.5 L610.3,392.4M579,367.3 L610.3,392.4M579,367.3 L674.8,392.2M641.6,368 L674.8,392.2M641.6,368 L735.3,392M699.2,368.7 L735.3,392M699.2,368.7 L791,391.9M754.2,369.3 L791,391.9M754.2,369.3 L843,391.7M803.7,369.9 L843,391.7M803.7,369.9 L891.2,391.6M851.9,370.5 L891.2,391.6M851.9,370.5 L937,391.4M895,371 L937,391.4M895,371 L980.6,391.3M937.4,371.5 L980.6,391.3" fill="none" stroke="#000" stroke-opacity="0.8" stroke-width="1"/>
<path d="M359.4,364.7 L937.4,371.5 M377.5,393.1 L980.6,391.3" fill="none" stroke="#000" stroke-opacity="0.75" stroke-width="1"/>
</g></svg>
<!-- frame -->
<div class="b" style="left:0;top:0;width:1023px;height:2px"></div>
<div class="b" style="left:0;top:0;width:2px;height:767px"></div>
<div class="b" style="left:1021px;top:0;width:2px;height:767px"></div>
<div class="b" style="left:0;top:765px;width:1023px;height:2px"></div>
<div class="b" style="left:255px;top:0;width:2px;height:767px"></div>
<div class="b" style="left:11px;top:59px;width:234px;height:2px"></div>
<div class="t" style="left:69px;top:6px;font-size:31px;font-weight:bold;color:#6a3cf5;transform:scaleX(0.897);transform-origin:0 0">3DEC 9.6</div>
<div class="t" style="left:50px;top:41px;font-size:10px;color:#6a3cf5">©2025 Itasca Consulting Group, Inc.</div>
<div class="t" style="left:12px;top:68px;font-size:14px;font-weight:bold;transform:scaleX(1.035);transform-origin:0 0">Flow-Planes Joint pore pressure</div>
<div class="t" style="left:12px;top:264px;font-size:14px;font-weight:bold">Block&nbsp; Gp Pore Pressure</div>
<div id="leg1" style="position:absolute;left:0;top:0">
<div class="sw" style="top:84px;height:24px;background:#ff0000"></div>
<div class="sw" style="top:108px;height:16px;background:#ff7000"></div>
<div class="sw" style="top:124px;height:16px;background:#ffe000"></div>
<div class="sw" style="top:140px;height:16px;background:#b0ff00"></div>
<div class="sw" style="top:156px;height:16px;background:#40f000"></div>
<div class="sw" style="top:172px;height:16px;background:#00f040"></div>
<div class="sw" style="top:188px;height:16px;background:#00ffa0"></div>
<div class="sw" style="top:204px;height:16px;background:#00e0ff"></div>
<div class="sw" style="top:220px;height:16px;background:#0064ff"></div>
<div class="sw" style="top:236px;height:24px;background:#0000ff"></div>
<div class="lb" style="top:87px">1.00E+06</div>
<div class="lb" style="top:103px">9.00E+05</div>
<div class="lb" style="top:119px">8.00E+05</div>
<div class="lb" style="top:135px">7.00E+05</div>
<div class="lb" style="top:151px">6.00E+05</div>
<div class="lb" style="top:167px">5.00E+05</div>
<div class="lb" style="top:183px">4.00E+05</div>
<div class="lb" style="top:199px">3.00E+05</div>
<div class="lb" style="top:215px">2.00E+05</div>
<div class="lb" style="top:231px">1.00E+05</div>
<div class="lb" style="top:247px">0.00E+00</div>
</div>
<div id="leg2" style="position:absolute;left:0;top:196px">
<div class="sw" style="top:84px;height:24px;background:#ff0000"></div>
<div class="sw" style="top:108px;height:16px;background:#ff7000"></div>
<div class="sw" style="top:124px;height:16px;background:#ffe000"></div>
<div class="sw" style="top:140px;height:16px;background:#b0ff00"></div>
<div class="sw" style="top:156px;height:16px;background:#40f000"></div>
<div class="sw" style="top:172px;height:16px;background:#00f040"></div>
<div class="sw" style="top:188px;height:16px;background:#00ffa0"></div>
<div class="sw" style="top:204px;height:16px;background:#00e0ff"></div>
<div class="sw" style="top:220px;height:16px;background:#0064ff"></div>
<div class="sw" style="top:236px;height:24px;background:#0000ff"></div>
<div class="lb" style="top:87px">1.00E+06</div>
<div class="lb" style="top:103px">9.00E+05</div>
<div class="lb" style="top:119px">8.00E+05</div>
<div class="lb" style="top:135px">7.00E+05</div>
<div class="lb" style="top:151px">6.00E+05</div>
<div class="lb" style="top:167px">5.00E+05</div>
<div class="lb" style="top:183px">4.00E+05</div>
<div class="lb" style="top:199px">3.00E+05</div>
<div class="lb" style="top:215px">2.00E+05</div>
<div class="lb" style="top:231px">1.00E+05</div>
<div class="lb" style="top:247px">0.00E+00</div>
</div>
</body></html>
